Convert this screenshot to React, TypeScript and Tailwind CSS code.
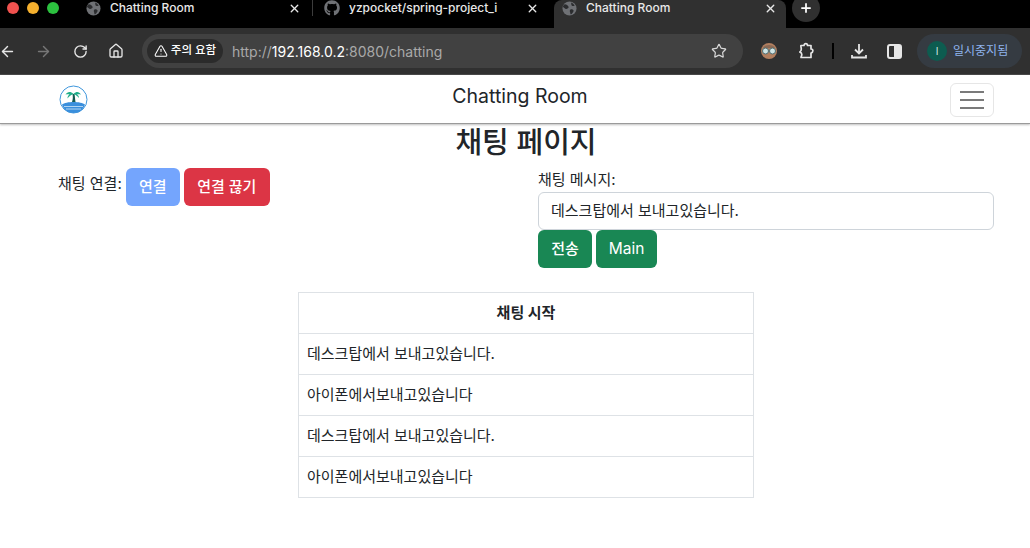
import { ArrowLeft, ArrowRight, RotateCw, House, TriangleAlert, Star, X, Plus } from "lucide-react";
import { FaGithub } from "react-icons/fa";

const cjk = "font-['Inter','Noto_Sans_CJK_KR',sans-serif]";

function Tab({ title, w, icon }: { title: string; w: string; icon: React.ReactNode }) {
  return (
    <div className={`flex items-center h-full ${w}`}>
      {icon}
      <span className="ml-[9px] flex-1 text-[12px] text-[#e8e8e8] font-medium whitespace-nowrap overflow-hidden">{title}</span>
    </div>
  );
}

const GlobeIcon = () => (
  <svg width="15" height="15" viewBox="0 0 16 16">
    <circle cx="8" cy="8" r="7.500" fill="#6f7175" />
    <path d="M3 3.500c2 .5 3 1 4 2.500c.5 1.500-1.500 2-2.500 2.500C3 8 2 7 1 6c.3-1 1-2 2-2.500zM9 9c1.500-.5 3 0 3.500 1.500c-.5 1.500-1.500 3-3 4c-1-1-.5-2-1-3c-.5-1 0-2 .5-2.500zM10 1.500c1 .5 3 2 3.500 3.500c-1 .5-2 .5-3 0c-.5-1-1-2-.5-3.500z" fill="#2b2c2e" />
  </svg>
);

function Logo() {
  return (
    <svg width="29" height="29" viewBox="0 0 29 29">
      <circle cx="14.500" cy="14.500" r="13.500" fill="#fff" stroke="#3f97dc" strokeWidth="1" />
      <path d="M3 19.500c4-3.500 19-3.500 23 0c-1.500 5-6 8.500-11.500 8.500S4.500 24.500 3 19.500z" fill="#3a8fdc" />
      <path d="M5 21.500h19M7 24h15" stroke="#cfe6f7" strokeWidth="0.8" />
      <path d="M13 17c1-3 1-5 .5-8h2c.5 3 .5 5 1 8z" fill="#12594f" />
      <path d="M14.500 9c-3-3-6-2.500-8 .5c2-.5 3-.5 4 0c-1.500 1-2 2-2 4c1.500-2.500 3.500-3.500 6-4.500zM14.500 9c3-3 5.500-2.500 7.500 .5c-2-.5-3-.5-4 0c1.500 1 2 2 2 3.500c-1.500-2-3-3-5.500-4z" fill="#1fae8a" />
    </svg>
  );
}

function Row({ text, bold }: { text: string; bold?: boolean }) {
  return (
    <div className={`h-[41px] last:h-[40px] px-2 flex items-center border-b border-[#dee2e6] last:border-b-0 text-[#212529] ${bold ? "justify-center font-bold text-[15px]" : "text-[15px]"}`}>
      {text}
    </div>
  );
}

export default function App() {
  return (
    <div className={`w-[1030px] h-[548px] bg-white overflow-hidden ${cjk}`}>
      {/* tab strip */}
      <div className="h-[28px] bg-black flex items-center">
        <div className="flex items-center gap-[8px] pl-[7px] w-[86px] h-full pb-[12px]">
          <span className="w-[12px] h-[12px] rounded-full bg-[#f0524f]" />
          <span className="w-[12px] h-[12px] rounded-full bg-[#f5b02e]" />
          <span className="w-[12px] h-[12px] rounded-full bg-[#2cc13f]" />
        </div>
        <div className="flex items-center h-full pb-[12px] w-[226px]">
          <Tab title="Chatting Room" w="w-[202px]" icon={<GlobeIcon />} />
          <X size={13} strokeWidth={2.5} className="text-[#e8e8e8]" />
        </div>
        <div className="w-px h-[16px] mb-[12px] bg-[#3c3c3c]" />
        <div className="flex items-center h-full pb-[12px] w-[241px] pl-[11px]">
          <Tab title="yzpocket/spring-project_i" w="w-[202px]" icon={<FaGithub size={16} className="text-[#6f7175]" />} />
          <X size={13} strokeWidth={2.5} className="text-[#e8e8e8]" />
        </div>
        <div className="h-full w-[232px] bg-[#303030] rounded-t-[8px] flex items-center pb-[12px] pl-[8px]">
          <Tab title="Chatting Room" w="w-[202px]" icon={<GlobeIcon />} />
          <X size={13} strokeWidth={2.5} className="text-[#e8e8e8]" />
        </div>
        <div className="ml-[6px] w-[28px] h-[28px] -mt-[12px] rounded-full bg-[#303030] flex items-center justify-center">
          <Plus size={14} strokeWidth={3} className="text-white" />
        </div>
      </div>

      {/* toolbar */}
      <div className="h-[47px] bg-[#303030] flex items-center border-b border-[#4a4a4a]">
        <ArrowLeft size={17} className="text-[#e6e6e6] -ml-[1px]" />
        <ArrowRight size={17} className="text-[#777] ml-[19px]" />
        <RotateCw size={15} strokeWidth={2.2} className="text-[#e6e6e6] ml-[21px]" />
        <House size={16} className="text-[#e6e6e6] ml-[20px]" />
        <div className="ml-[18px] w-[601px] h-[34px] rounded-full bg-[#414141] flex items-center pl-[5px] pr-[16px]">
          <div className="h-[24px] w-[76px] rounded-full bg-[#2b2b2b] flex items-center justify-center gap-[3px] text-white text-[11.5px] font-medium whitespace-nowrap">
            <TriangleAlert size={14} strokeWidth={1.8} />
            주의 요함
          </div>
          <span className="ml-[9px] text-[14px] text-[#a9a9a9] whitespace-nowrap">
            http://<span className="text-white">192.168.0.2</span>:8080/chatting
          </span>
          <Star size={16} strokeWidth={1.8} className="text-[#d8d8d8] ml-auto" />
        </div>
        <svg width="18" height="18" viewBox="0 0 18 18" className="ml-[17px]">
          <circle cx="9" cy="9" r="8" fill="#b27f5f" />
          <path d="M3 6c1-4 11-4 12 0z" fill="#8a6a55" />
          <circle cx="5.500" cy="9" r="3" fill="#cfe5e5" stroke="#4f6c70" strokeWidth="1" />
          <circle cx="12.500" cy="9" r="3" fill="#cfe5e5" stroke="#4f6c70" strokeWidth="1" />
        </svg>
        <svg width="18" height="18" viewBox="0 0 18 18" fill="none" stroke="#e6e6e6" strokeWidth="1.700" strokeLinejoin="round" className="ml-[18px]">
          <path d="M5 3.500h3c0-2.500 3.500-2.500 3.500 0h3.500v3.500c2.500 0 2.500 3.500 0 4v4.500h-10c0-1 .8-1.500 .8-3c0-1.500-.8-2-2-2.500c1-.5 1.500-1.500 1.500-3c0-1.500-.8-2.500-.3-3.500z" />
        </svg>
        <div className="w-[2px] h-[16px] bg-black ml-[18px]" />
        <svg width="18" height="18" viewBox="0 0 18 18" fill="none" stroke="#e6e6e6" strokeWidth="1.800" className="ml-[16px]">
          <path d="M9 2v9M5 7.500l4 4l4-4M2 13v2.500h14V13" />
        </svg>
        <span className="ml-[19px] w-[15px] h-[15px] rounded-[3px] border-2 border-[#e6e6e6] flex justify-end">
          <span className="w-[6px] h-full bg-[#e6e6e6]" />
        </span>
        <div className="ml-[15px] w-[105px] h-[34px] rounded-full bg-[#353b42] flex items-center pl-[10px] gap-[6px] whitespace-nowrap">
          <span className="w-[20px] h-[20px] rounded-full bg-[#0d5c50] text-[#d7e8e2] text-[10px] flex items-center justify-center">I</span>
          <span className="text-[12px] text-[#8fb4ee]">일시중지됨</span>
        </div>
      </div>

      {/* navbar */}
      <nav className="h-[49px] bg-white border-b border-[#9a9a9a] shadow-[0_1px_2px_rgba(0,0,0,0.25)] flex items-center pl-[59px] pr-[36px] relative">
        <Logo />
        <span className="absolute left-[10px] right-0 top-[9px] text-center text-[19.5px] text-[#212529] leading-[24px]">Chatting Room</span>
        <button className="ml-auto w-[44px] h-[34px] mt-[2px] rounded-[6px] border border-[#e6e6e6] flex flex-col items-center justify-center gap-[6px]">
          <span className="w-[24px] h-[2px] bg-[#7a7a7a]" />
          <span className="w-[24px] h-[2px] bg-[#7a7a7a]" />
          <span className="w-[24px] h-[2px] bg-[#7a7a7a]" />
        </button>
      </nav>

      {/* page */}
      <h1 className="text-center text-[29px] leading-[36px] font-medium text-[#212529] mt-[1px] pl-[22px]">채팅 페이지</h1>
      <div className="flex mt-[7px] pl-[58px] text-[#212529] text-[15px]">
        <div className="w-[480px] shrink-0 flex items-start">
          <span className="mt-[5px] mr-[4px]">채팅 연결:</span>
          <button className="h-[38px] w-[54px] rounded-[6px] bg-[#74a5fd] text-white text-[15px] font-medium">연결</button>
          <button className="ml-[4px] h-[38px] w-[86px] rounded-[6px] bg-[#dc3545] text-white text-[15px] font-medium">연결 끊기</button>
        </div>
        <div className="w-[456px] shrink-0">
          <div className="leading-[24px]">채팅 메시지:</div>
          <div className="h-[38px] rounded-[6px] border border-[#ced4da] flex items-center px-[12px]">데스크탑에서 보내고있습니다.</div>
          <div className="flex gap-[4px]">
            <button className="h-[38px] w-[54px] rounded-[6px] bg-[#198754] text-white text-[15px] font-medium">전송</button>
            <button className="h-[38px] w-[61px] rounded-[6px] bg-[#198754] text-white text-[15.5px]">Main</button>
          </div>
        </div>
      </div>

      {/* chat table */}
      <div className="mt-[24px] ml-[298px] w-[456px] border border-[#dee2e6]">
        <Row text="채팅 시작" bold />
        <Row text="데스크탑에서 보내고있습니다." />
        <Row text="아이폰에서보내고있습니다" />
        <Row text="데스크탑에서 보내고있습니다." />
        <Row text="아이폰에서보내고있습니다" />
      </div>
    </div>
  );
}
